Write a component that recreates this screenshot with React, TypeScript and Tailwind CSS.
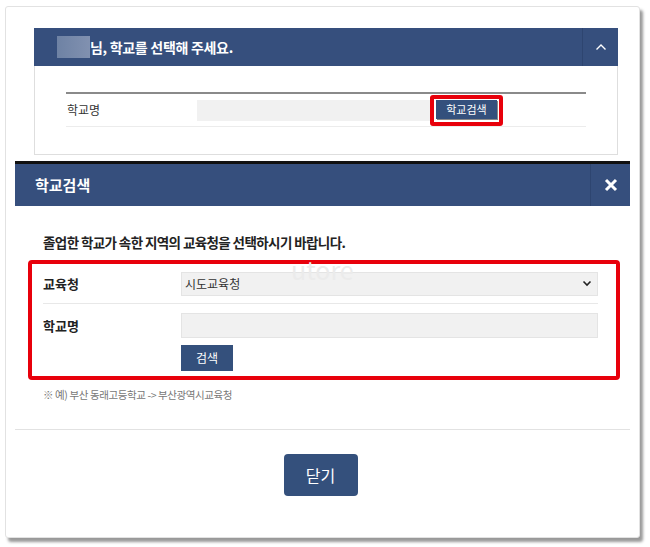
import React from "react";

const font = { fontFamily: '"Noto Sans CJK KR", "Noto Sans", sans-serif' };

function TopPanel() {
  return (
    <div className="ml-[28px] mt-[21px] w-[584px]">
      <div className="flex h-[38px] items-center bg-[#364f7d]">
        <div className="ml-[23px] h-[22px] w-[33px] bg-gradient-to-r from-[#6e82a4] to-[#8191b0]" />
        <span className="text-[14px] font-semibold tracking-[-0.3px] text-white">님, 학교를 선택해 주세요.</span>
        <div className="ml-auto flex h-full w-[36px] items-center justify-center border-l border-[#2e4570]">
          <svg width="12" height="8" viewBox="0 0 12 8" fill="none">
            <path d="M1.5 6.5 6 2l4.5 4.5" stroke="white" strokeWidth="1.4" />
          </svg>
        </div>
      </div>
      <div className="h-[89px] border border-t-0 border-[#dedede] bg-white px-[31px] pt-[26px]">
        <div className="flex h-[35px] items-center border-t-2 border-b border-t-[#8a8a8a] border-b-[#ececec]">
          <span className="w-[131px] pl-[1px] text-[12px] text-[#333]">학교명</span>
          <div className="h-[21px] w-[233px] bg-[#f1f1f1]" />
          <div className="rounded-[3px] border-4 border-[#e8000b] px-[2px] pb-[3px] pt-[1px]">
            <div className="flex h-[19px] w-[61px] items-center justify-center bg-[#34507c] text-[11px] text-white shadow-[1px_1px_0_#888]">
              학교검색
            </div>
          </div>
        </div>
      </div>
    </div>
  );
}

function Modal() {
  return (
    <div className="relative ml-[9px] mt-[6px] w-[615px] flex-1">
      <div className="h-[3px] bg-[#111]" />
      <div className="flex h-[42px] items-center bg-[#364f7d]">
        <span className="ml-[20px] text-[15px] font-bold text-white">학교검색</span>
        <div className="ml-auto flex h-full w-[40px] items-center justify-center border-l border-[#2e4570]">
          <svg width="14" height="14" viewBox="0 0 14 14">
            <path d="M2 2l10 10M12 2 2 12" stroke="white" strokeWidth="3" />
          </svg>
        </div>
      </div>
      <div className="pl-[13px] pr-[10px] pt-[26px]">
        <p className="pl-[15px] text-[13.5px] font-bold tracking-[-0.6px] text-[#222]">
          졸업한 학교가 속한 지역의 교육청을 선택하시기 바랍니다.
        </p>
        <div className="mt-[8px] rounded-[4px] border-4 border-[#e8000b] pl-[11px] pr-[18px]">
          <div className="flex h-[40px] items-center border-b border-[#e8e8e8]">
            <span className="w-[138px] text-[13px] font-semibold text-[#222]">교육청</span>
            <div className="flex h-[24px] flex-1 items-center justify-between border border-[#e4e4e4] bg-[#f1f1f1] px-[3px]">
              <span className="text-[12px] text-[#333]">시도교육청</span>
              <svg width="10" height="7" viewBox="0 0 10 7" fill="none" className="mr-[2px]">
                <path d="M1.5 1.5 5 5l3.5-3.5" stroke="#222" strokeWidth="1.6" />
              </svg>
            </div>
          </div>
          <div className="flex pt-[9px]">
            <span className="w-[138px] pt-[3px] text-[13px] font-semibold text-[#222]">학교명</span>
            <div className="flex-1">
              <div className="h-[25px] border border-[#e4e4e4] bg-[#f1f1f1]" />
              <div className="mb-[5px] mt-[7px] flex h-[26px] w-[52px] items-center justify-center bg-[#34507c] text-[12px] text-white">
                검색
              </div>
            </div>
          </div>
        </div>
        <p className="mt-[7px] pl-[15px] text-[10.5px] tracking-[-0.4px] text-[#777]">※ 예) 부산 동래고등학교 -&gt; 부산광역시교육청</p>
      </div>
      <div className="mt-[26px] border-t border-[#e2e2e2]" />
      <div className="flex justify-center pr-[4px] pt-[24px]">
        <div className="flex h-[42px] w-[74px] items-center justify-center rounded-[4px] bg-[#34507c] text-[16px] text-white">
          닫기
        </div>
      </div>
      <span className="pointer-events-none absolute left-[276px] top-[90px] text-[25px] text-[#ebebeb]">utore</span>
    </div>
  );
}

export default function App() {
  return (
    <div className="h-[547px] w-[650px] bg-white pl-[5px] pt-[6px]" style={font}>
      <div className="flex h-[532px] w-[635px] flex-col rounded-[3px] border border-[#e2e2e2] bg-white shadow-[3px_4px_3px_rgba(0,0,0,0.4)]">
        <TopPanel />
        <Modal />
      </div>
    </div>
  );
}
